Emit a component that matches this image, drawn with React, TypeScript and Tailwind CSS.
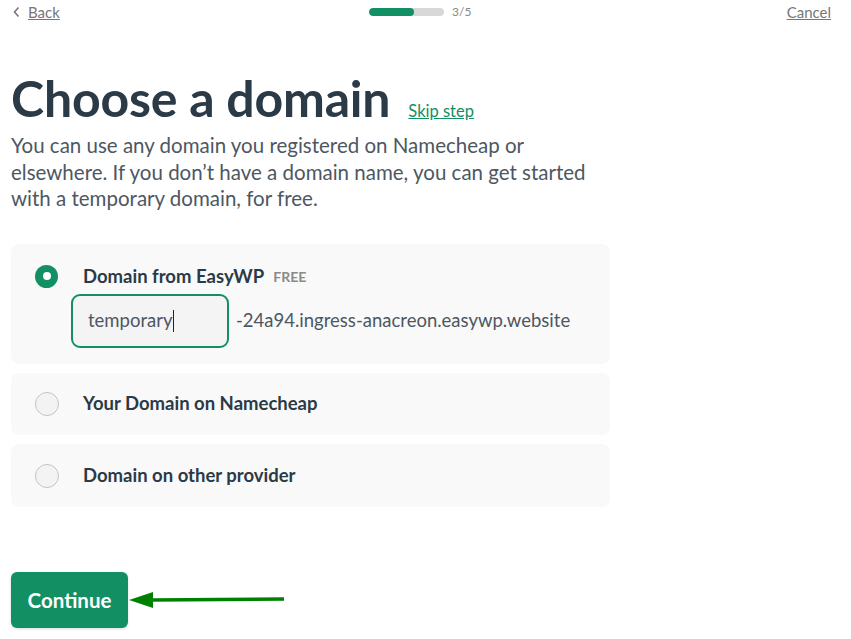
import React from "react";

function Radio({ checked }: { checked?: boolean }) {
  if (checked) {
    return (
      <span className="flex h-[23px] w-[23px] shrink-0 items-center justify-center rounded-full bg-[#138f64]">
        <span className="h-[8px] w-[8px] rounded-full bg-white" />
      </span>
    );
  }
  return <span className="h-[24px] w-[24px] shrink-0 rounded-full border border-[#c4c4c4] bg-[#f3f3f3]" />;
}

export default function App() {
  return (
    <div className="relative min-h-[639px] w-[851px] bg-white text-[#2b3a47]" style={{ fontFamily: "Lato, 'Noto Sans', sans-serif" }}>
      {/* Top bar */}
      <div className="flex h-[24px] items-center justify-between pl-[12px] pr-[20px]">
        <a className="flex items-center gap-[6px] text-[15px] text-[#777] underline">
          <svg width="10" height="12" viewBox="0 0 10 12" fill="none">
            <path d="M6.5 1.5 L2.5 6 L6.5 10.5" stroke="#777" strokeWidth="1.6" />
          </svg>
          Back
        </a>
        <div className="-ml-[6px] flex items-center gap-[8px]">
          <div className="h-[8px] w-[75px] overflow-hidden rounded-full bg-[#d8d8d8]">
            <div className="h-full w-[45px] rounded-full bg-[#138f64]" />
          </div>
          <span className="text-[12px] text-[#888]">3/5</span>
        </div>
        <a className="text-[15px] text-[#777] underline">Cancel</a>
      </div>

      <div className="px-[11px]">
        <div className="mt-[44px] flex items-baseline gap-[18px]">
          <h1 className="text-[50px] font-bold leading-[60px] tracking-[-0.2px] text-[#2b3a47]">Choose a domain</h1>
          <a className="text-[16.5px] text-[#138f64] underline">Skip step</a>
        </div>
        <p className="mt-[4px] text-[20.5px] leading-[26.5px] text-[#4d5762]">
          You can use any domain you registered on Namecheap or
          <br />
          elsewhere. If you don’t have a domain name, you can get started
          <br />
          with a temporary domain, for free.
        </p>

        <div className="mt-[32px] flex w-[599px] flex-col gap-[9px]">
          <div className="rounded-[8px] bg-[#f9f9f9] pb-[16px] pl-[24px] pt-[19px]">
            <div className="flex items-center gap-[25px]">
              <Radio checked />
              <span className="text-[18.5px] font-bold text-[#2b3a47]">Domain from EasyWP</span>
              <span className="-ml-[16px] text-[14px] font-bold text-[#8a8a8a]">FREE</span>
            </div>
            <div className="mt-[4px] flex items-center gap-[7px] pl-[36px]">
              <div className="flex h-[54px] w-[158px] items-center rounded-[9px] border-2 border-[#138f64] bg-[#f4f4f4] pl-[15px] text-[18.5px] text-[#4d5762]">
                temporary<span className="ml-[1px] inline-block h-[22px] w-[1px] bg-[#222]" />
              </div>
              <span className="text-[18.5px] text-[#4d5762]">-24a94.ingress-anacreon.easywp.website</span>
            </div>
          </div>
          <div className="flex h-[62px] items-center gap-[24px] rounded-[8px] bg-[#f9f9f9] pl-[24px]">
            <Radio />
            <span className="text-[18.5px] font-bold text-[#2b3a47]">Your Domain on Namecheap</span>
          </div>
          <div className="flex h-[63px] items-center gap-[24px] rounded-[8px] bg-[#f9f9f9] pl-[24px]">
            <Radio />
            <span className="text-[18.5px] font-bold text-[#2b3a47]">Domain on other provider</span>
          </div>
        </div>

        <div className="mt-[65px] flex items-center">
          <button className="h-[56px] w-[117px] rounded-[6px] bg-[#138f64] text-[20.5px] font-bold text-white shadow-[0_1px_3px_rgba(0,0,0,0.15)]">
            Continue
          </button>
          <svg width="160" height="20" viewBox="0 0 160 20" className="ml-[1px]">
            <line x1="22" y1="10" x2="155" y2="9" stroke="#008000" strokeWidth="3.5" />
            <polygon points="0,10 24,2 24,18" fill="#008000" />
          </svg>
        </div>
      </div>
    </div>
  );
}
